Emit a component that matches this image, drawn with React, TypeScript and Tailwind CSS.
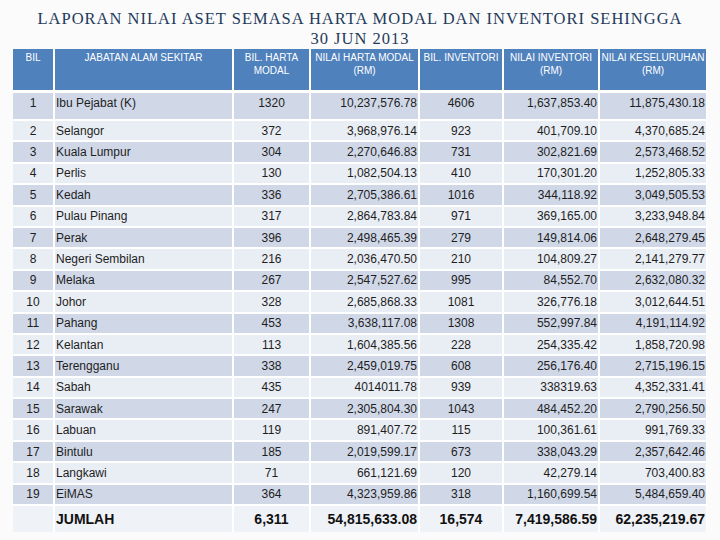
const rows = [
  { no: 1, name: "Ibu Pejabat (K)", bilHarta: "1320", nilaiHarta: "10,237,576.78", bilInv: "4606", nilaiInv: "1,637,853.40", total: "11,875,430.18" },
  { no: 2, name: "Selangor", bilHarta: "372", nilaiHarta: "3,968,976.14", bilInv: "923", nilaiInv: "401,709.10", total: "4,370,685.24" },
  { no: 3, name: "Kuala Lumpur", bilHarta: "304", nilaiHarta: "2,270,646.83", bilInv: "731", nilaiInv: "302,821.69", total: "2,573,468.52" },
  { no: 4, name: "Perlis", bilHarta: "130", nilaiHarta: "1,082,504.13", bilInv: "410", nilaiInv: "170,301.20", total: "1,252,805.33" },
  { no: 5, name: "Kedah", bilHarta: "336", nilaiHarta: "2,705,386.61", bilInv: "1016", nilaiInv: "344,118.92", total: "3,049,505.53" },
  { no: 6, name: "Pulau Pinang", bilHarta: "317", nilaiHarta: "2,864,783.84", bilInv: "971", nilaiInv: "369,165.00", total: "3,233,948.84" },
  { no: 7, name: "Perak", bilHarta: "396", nilaiHarta: "2,498,465.39", bilInv: "279", nilaiInv: "149,814.06", total: "2,648,279.45" },
  { no: 8, name: "Negeri Sembilan", bilHarta: "216", nilaiHarta: "2,036,470.50", bilInv: "210", nilaiInv: "104,809.27", total: "2,141,279.77" },
  { no: 9, name: "Melaka", bilHarta: "267", nilaiHarta: "2,547,527.62", bilInv: "995", nilaiInv: "84,552.70", total: "2,632,080.32" },
  { no: 10, name: "Johor", bilHarta: "328", nilaiHarta: "2,685,868.33", bilInv: "1081", nilaiInv: "326,776.18", total: "3,012,644.51" },
  { no: 11, name: "Pahang", bilHarta: "453", nilaiHarta: "3,638,117.08", bilInv: "1308", nilaiInv: "552,997.84", total: "4,191,114.92" },
  { no: 12, name: "Kelantan", bilHarta: "113", nilaiHarta: "1,604,385.56", bilInv: "228", nilaiInv: "254,335.42", total: "1,858,720.98" },
  { no: 13, name: "Terengganu", bilHarta: "338", nilaiHarta: "2,459,019.75", bilInv: "608", nilaiInv: "256,176.40", total: "2,715,196.15" },
  { no: 14, name: "Sabah", bilHarta: "435", nilaiHarta: "4014011.78", bilInv: "939", nilaiInv: "338319.63", total: "4,352,331.41" },
  { no: 15, name: "Sarawak", bilHarta: "247", nilaiHarta: "2,305,804.30", bilInv: "1043", nilaiInv: "484,452.20", total: "2,790,256.50" },
  { no: 16, name: "Labuan", bilHarta: "119", nilaiHarta: "891,407.72", bilInv: "115", nilaiInv: "100,361.61", total: "991,769.33" },
  { no: 17, name: "Bintulu", bilHarta: "185", nilaiHarta: "2,019,599.17", bilInv: "673", nilaiInv: "338,043.29", total: "2,357,642.46" },
  { no: 18, name: "Langkawi", bilHarta: "71", nilaiHarta: "661,121.69", bilInv: "120", nilaiInv: "42,279.14", total: "703,400.83" },
  { no: 19, name: "EiMAS", bilHarta: "364", nilaiHarta: "4,323,959.86", bilInv: "318", nilaiInv: "1,160,699.54", total: "5,484,659.40" },
];

const cols = "grid grid-cols-[40px_177px_75px_107px_82px_94px_106px] gap-x-[2px]";

export default function App() {
  return (
    <div className="w-[720px] h-[540px] overflow-hidden bg-[#fbfbfb] font-['Liberation_Sans',Arial,sans-serif]">
      <div className="pt-[9px] text-center text-[#1f3a5c] font-['Liberation_Serif',serif] text-[16.5px] leading-[20px] tracking-[1px]">
        <div>LAPORAN NILAI ASET SEMASA HARTA MODAL DAN INVENTORI SEHINGGA</div>
        <div>30 JUN 2013</div>
      </div>

      <div className="ml-[13px] w-[694px] flex flex-col">
        <div className={`${cols} h-[41px] bg-white text-white text-[10px] leading-[13px] text-center`}>
          <div className="bg-[#4f81bd] pt-[2px]">BIL</div>
          <div className="bg-[#4f81bd] pt-[2px]">JABATAN ALAM SEKITAR</div>
          <div className="bg-[#4f81bd] pt-[2px]">BIL. HARTA<br />MODAL</div>
          <div className="bg-[#4f81bd] pt-[2px]">NILAI HARTA MODAL<br />(RM)</div>
          <div className="bg-[#4f81bd] pt-[2px]">BIL. INVENTORI</div>
          <div className="bg-[#4f81bd] pt-[2px]">NILAI INVENTORI<br />(RM)</div>
          <div className="bg-[#4f81bd] pt-[2px]">NILAI KESELURUHAN<br />(RM)</div>
        </div>

        <div className="h-[3px] bg-white" />

        <div className="flex flex-col gap-y-[2px] bg-white text-[12px] text-[#1e1e1e]">
          {rows.map((r, i) => {
            const bg = i % 2 === 0 ? "bg-[#d0d8e8]" : "bg-[#e9edf4]";
            const h = i === 0 ? "h-[26px] items-start pt-[1px]" : "h-[19.4px] items-center";
            return (
              <div key={r.no} className={`${cols} bg-white`}>
                <div className={`flex ${h} justify-center ${bg}`}>{r.no}</div>
                <div className={`flex ${h} pl-[1px] ${bg}`}>{r.name}</div>
                <div className={`flex ${h} justify-center ${bg}`}>{r.bilHarta}</div>
                <div className={`flex ${h} justify-end pr-[1px] ${bg}`}>{r.nilaiHarta}</div>
                <div className={`flex ${h} justify-center ${bg}`}>{r.bilInv}</div>
                <div className={`flex ${h} justify-end pr-[1px] ${bg}`}>{r.nilaiInv}</div>
                <div className={`flex ${h} justify-end pr-[1px] ${bg}`}>{r.total}</div>
              </div>
            );
          })}

          <div className={`${cols} h-[26px] bg-white text-[14px] font-bold text-[#111]`}>
            <div className="bg-[#eff2f7]" />
            <div className="bg-[#eff2f7] flex items-center pl-[1px]">JUMLAH</div>
            <div className="bg-[#eff2f7] flex items-center justify-center">6,311</div>
            <div className="bg-[#eff2f7] flex items-center justify-end pr-[1px]">54,815,633.08</div>
            <div className="bg-[#eff2f7] flex items-center justify-center">16,574</div>
            <div className="bg-[#eff2f7] flex items-center justify-end pr-[1px]">7,419,586.59</div>
            <div className="bg-[#eff2f7] flex items-center justify-end pr-[1px]">62,235,219.67</div>
          </div>
        </div>
      </div>
    </div>
  );
}
